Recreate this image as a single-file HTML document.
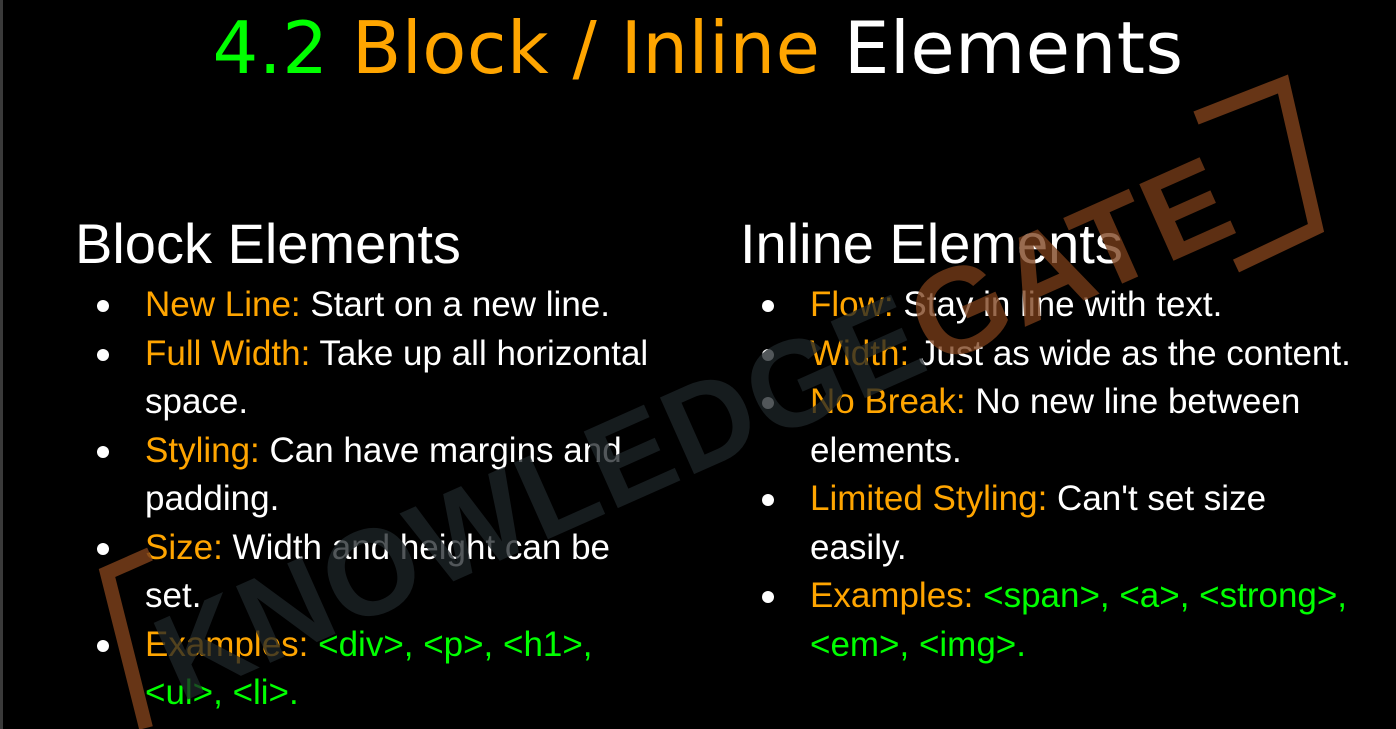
<!DOCTYPE html>
<html><head><meta charset="utf-8"><style>
html,body{margin:0;padding:0;background:#000;width:1396px;height:729px;overflow:hidden;position:relative;font-family:"Liberation Sans",Arial,sans-serif}
.edge{position:absolute;left:0;top:0;width:3px;height:729px;background:#3a3a3a}
h1{position:absolute;top:6px;left:0;width:1396px;text-align:center;margin:0;font-weight:normal;font-size:72px;font-family:"DejaVu Sans","Liberation Sans",sans-serif;letter-spacing:0.5px;color:#fff}
.g{color:#00ff00}.o{color:#ffa500}
h2{position:absolute;margin:0;font-weight:normal;font-size:56px;color:#fff;top:211px}
ul{position:absolute;margin:0;padding:0;list-style:none;top:281px;font-size:35px;line-height:48.5px;color:#fff}
li{position:relative;padding-left:70px}
li:before{content:"";position:absolute;left:22px;top:19px;width:12px;height:12px;border-radius:50%;background:#fff}
.wm{position:absolute;left:0;top:0;opacity:.85}
</style></head><body>
<div class="edge"></div>
<h1><span class="g">4.2</span> <span class="o">Block / Inline</span> Elements</h1>
<h2 style="left:75px">Block Elements</h2>
<h2 style="left:740px">Inline Elements</h2>
<ul style="left:75px;width:590px">
<li><span class="o">New Line:</span> Start on a new line.</li>
<li><span class="o">Full Width:</span> Take up all horizontal space.</li>
<li><span class="o">Styling:</span> Can have margins and padding.</li>
<li><span class="o">Size:</span> Width and height can be set.</li>
<li><span class="o">Examples:</span> <span class="g">&lt;div&gt;, &lt;p&gt;, &lt;h1&gt;, &lt;ul&gt;, &lt;li&gt;.</span></li>
</ul>
<ul style="left:740px;width:620px">
<li><span class="o">Flow:</span> Stay in line with text.</li>
<li><span class="o">Width:</span> Just as wide as the content.</li>
<li><span class="o">No Break:</span> No new line between elements.</li>
<li><span class="o">Limited Styling:</span> Can't set size easily.</li>
<li><span class="o">Examples:</span> <span class="g">&lt;span&gt;, &lt;a&gt;, &lt;strong&gt;, &lt;em&gt;, &lt;img&gt;.</span></li>
</ul>
<svg class="wm" width="1396" height="729" viewBox="0 0 1396 729">
<g fill="none" stroke="#7a3f1a" stroke-width="14" stroke-linejoin="miter">
<polyline points="150,554 107,573 146,728"/>
<polyline points="1196,118 1283,84 1316,228 1236,266"/>
</g>
<text x="695" y="470" text-anchor="middle" transform="rotate(-24 695 430)" font-family="Liberation Sans, sans-serif" font-weight="bold" font-size="122" fill="#1f2529" opacity="0.9" letter-spacing="2">KNOWLEDGE<tspan fill="#7a3f1a">GATE</tspan></text>
</svg>
</body></html>
